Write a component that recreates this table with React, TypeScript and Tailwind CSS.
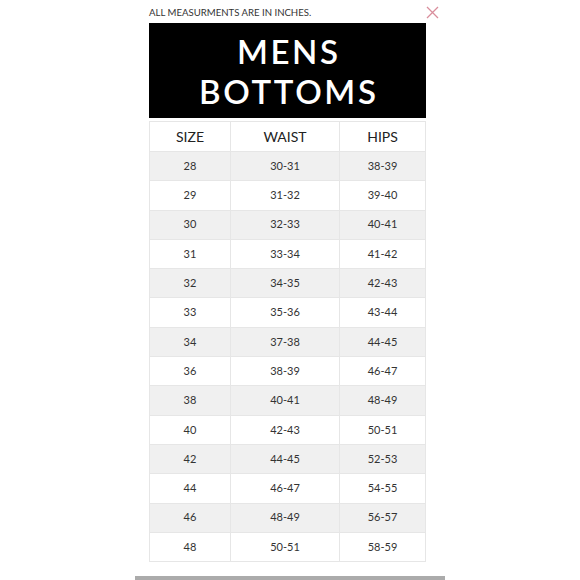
const ROWS: [string, string, string][] = [
  ["28", "30-31", "38-39"],
  ["29", "31-32", "39-40"],
  ["30", "32-33", "40-41"],
  ["31", "33-34", "41-42"],
  ["32", "34-35", "42-43"],
  ["33", "35-36", "43-44"],
  ["34", "37-38", "44-45"],
  ["36", "38-39", "46-47"],
  ["38", "40-41", "48-49"],
  ["40", "42-43", "50-51"],
  ["42", "44-45", "52-53"],
  ["44", "46-47", "54-55"],
  ["46", "48-49", "56-57"],
  ["48", "50-51", "58-59"],
];

export default function App() {
  return (
    <div className="w-[580px] h-[580px] bg-white relative overflow-hidden font-['Lato','Liberation_Sans',sans-serif] text-[#222]">
      <div className="ml-[149px] w-[277px]">
        <div className="h-[23px] flex items-center pt-[3px]">
          <span className="text-[9.6px] text-[#333]">ALL MEASURMENTS ARE IN INCHES.</span>
        </div>
        <div className="bg-black h-[95px] flex flex-col items-center justify-center text-white text-[33px] leading-[40px] tracking-[0.08em] font-semibold pt-[1px]">
          <span className="pl-[0.08em]">MENS</span>
          <span className="pl-[0.08em]">BOTTOMS</span>
        </div>
        <table className="mt-[3px] w-full border-collapse text-center">
          <thead>
            <tr className="h-[30px] text-[14px] text-[#222]">
              <th className="w-[81px] border border-[#e6e6e6] font-normal">SIZE</th>
              <th className="w-[109px] border border-[#e6e6e6] font-normal">WAIST</th>
              <th className="border border-[#e6e6e6] font-normal">HIPS</th>
            </tr>
          </thead>
          <tbody>
            {ROWS.map((r, i) => (
              <tr key={r[0]} className={`h-[29.3px] text-[11px] text-[#333] ${i % 2 === 0 ? "bg-[#f0f0f0]" : "bg-white"}`}>
                <td className="border border-[#e6e6e6]">{r[0]}</td>
                <td className="border border-[#e6e6e6]">{r[1]}</td>
                <td className="border border-[#e6e6e6]">{r[2]}</td>
              </tr>
            ))}
          </tbody>
        </table>
      </div>
      <svg className="absolute left-[426px] top-[6px]" width="13" height="13" viewBox="0 0 13 13">
        <path d="M1 1 L12 12 M12 1 L1 12" stroke="#d98e9c" strokeWidth="1.3" fill="none" />
      </svg>
      <div className="absolute left-[135px] top-[576px] w-[310px] h-[4px] bg-[#ababab]" />
    </div>
  );
}
